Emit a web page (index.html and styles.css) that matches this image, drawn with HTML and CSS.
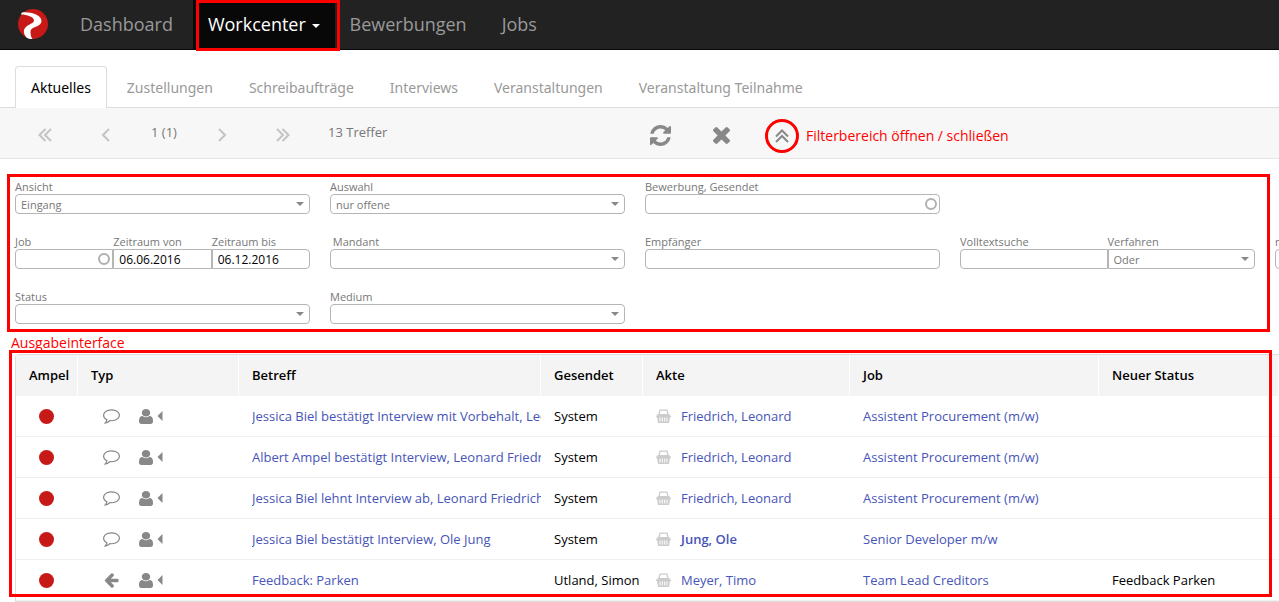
FILE: index.html
```html
<!DOCTYPE html>
<html lang="de">
<head>
	<meta charset="utf-8">
	<title>Workcenter</title>
	<link rel="stylesheet" href="styles.css">
</head>
<body>
	<svg class="sprite" aria-hidden="true">
		<symbol id="i-comment" viewBox="0 256 1792 1536"><path d="M896 384q-204 0-381.5 69.5t-282 187.5-104.5 255q0 112 71.5 213.5t201.5 175.5l87 50-27 96q-24 91-70 172 152-63 275-171l43-38 57 6q69 8 130 8 204 0 381.5-69.5t282-187.5 104.5-255-104.5-255-282-187.5-381.5-69.5zm896 512q0 174-120 321.5t-326 233-450 85.5q-70 0-145-8-198 175-460 242-49 14-114 22h-5q-15 0-27-10.5t-16-27.5v-1q-3-4-.5-12t2-10 4.5-9.5l6-9 7-8.5 8-9q7-8 31-34.5t34.5-38 31-39.5 32.5-51 27-59 26-76q-157-89-247.5-220t-90.5-281q0-174 120-321.5t326-233 450-85.5 450 85.5 326 233 120 321.5z"/></symbol>
		<symbol id="i-user" viewBox="256 128 1280 1536" preserveAspectRatio="none"><path d="M1536 1399q0 109-62.5 187t-150.5 78h-854q-88 0-150.5-78t-62.5-187q0-85 8.5-160.5t31.5-152 58.5-131 94-89 134.5-34.5q131 128 313 128t313-128q76 0 134.5 34.5t94 89 58.5 131 31.5 152 8.5 160.5zm-256-887q0 159-112.5 271.5t-271.5 112.5-271.5-112.5-112.5-271.5 112.5-271.5 271.5-112.5 271.5 112.5 112.5 271.5z"/></symbol>
		<symbol id="i-arrow" viewBox="160 160 1504 1600"><path d="M1664 896v128q0 53-32.5 90.5t-84.5 37.5h-704l293 294q38 36 38 90t-38 90l-75 76q-37 37-90 37-52 0-91-37l-651-652q-37-37-37-90 0-52 37-91l651-650q38-38 91-38 52 0 90 38l75 74q38 38 38 91t-38 91l-293 293h704q52 0 84.5 37.5t32.5 90.5z"/></symbol>
		<symbol id="i-caret" viewBox="0 0 6 10"><path d="M5.500 0v10L.5 5z"/></symbol>
		<symbol id="i-basket" viewBox="0 0 15 14"><path d="M3 5.500L4 1.200h7L12 5.500" fill="none" stroke="currentColor" stroke-width="1.300"/><path d="M1.500 5h12v1.500h1.500v1.500h-1l-1 6H2L1 8H0V6.500h1.500zM3.500 8.500v4h1v-4zm2.300 0v4h1v-4zm2.400 0v4h1v-4zm2.300 0v4h1v-4z" fill-rule="evenodd"/></symbol>
		<symbol id="i-left" viewBox="0 0 14 14"><path d="M11 1L5 7l6 6"/></symbol>
		<symbol id="i-right" viewBox="0 0 14 14"><path d="M3 1l6 6-6 6"/></symbol>
		<symbol id="i-first" viewBox="0 0 14 14"><path d="M7.500 1l-6 6 6 6M13 1L7 7l6 6"/></symbol>
		<symbol id="i-last" viewBox="0 0 14 14"><path d="M1 1l6 6-6 6M6.500 1l6 6-6 6"/></symbol>
		<symbol id="i-up" viewBox="0 0 14 14"><path d="M1 7.500l6-6 6 6M1 13l6-6 6 6"/></symbol>
	</svg>

	<nav class="navbar">
		<a class="brand" href="#" aria-label="Start">
			<svg viewBox="0 0 30 30" width="30" height="30">
				<circle cx="15" cy="15" r="15" fill="#c81919"/>
				<path d="M4 3.500C12 2.500 23.500 6 23.500 12C23.500 18 12.500 17.500 12.500 22.500C12.500 25.500 13 28 14.500 30C12 30 10 29.500 8.500 28.500C6.500 26.500 5.500 23.500 6 21C7.500 15.500 16 15 16 11.500C16 8 9 5.500 2.800 5.500z" fill="#fff"/>
			</svg>
		</a>
		<a class="nav-link" href="#">Dashboard</a>
		<a class="nav-link active" href="#">Workcenter <span class="caret"></span></a>
		<a class="nav-link" href="#">Bewerbungen</a>
		<a class="nav-link" href="#">Jobs</a>
	</nav>

	<div class="tabs">
		<a class="tab active" href="#">Aktuelles</a>
		<a class="tab" href="#">Zustellungen</a>
		<a class="tab" href="#">Schreibaufträge</a>
		<a class="tab" href="#">Interviews</a>
		<a class="tab" href="#">Veranstaltungen</a>
		<a class="tab" href="#">Veranstaltung Teilnahme</a>
	</div>

	<div class="toolbar">
		<div class="pager">
			<button type="button" aria-label="Erste Seite"><svg class="chevron"><use href="#i-first"/></svg></button>
			<button type="button" aria-label="Vorherige Seite"><svg class="chevron"><use href="#i-left"/></svg></button>
			<span class="pages">1 (1)</span>
			<button type="button" aria-label="Nächste Seite"><svg class="chevron"><use href="#i-right"/></svg></button>
			<button type="button" aria-label="Letzte Seite"><svg class="chevron"><use href="#i-last"/></svg></button>
		</div>
		<span class="hits">13 Treffer</span>
		<div class="actions">
			<button type="button" aria-label="Aktualisieren">
				<svg width="21" height="21" viewBox="0 0 1536 1536"><path d="M1511 928q0 5-1 7-64 268-268 434.500t-478 166.500q-146 0-282.500-55t-243.500-157l-129 129q-19 19-45 19t-45-19-19-45v-448q0-26 19-45t45-19h448q26 0 45 19t19 45-19 45l-137 137q71 66 161 102t187 36q134 0 250-65t186-179q11-17 53-117 8-23 30-23h192q13 0 22.500 9.500t9.500 22.500zm25-800v448q0 26-19 45t-45 19h-448q-26 0-45-19t-19-45 19-45l138-138q-148-137-349-137-134 0-250 65t-186 179q-11 17-53 117-8 23-30 23h-199q-13 0-22.500-9.500t-9.500-22.500v-7q65-268 270-434.500t480-166.500q146 0 284 55.500t245 156.500l130-129q19-19 45-19t45 19 19 45z"/></svg>
			</button>
			<button type="button" aria-label="Zurücksetzen">
				<svg width="17" height="17" viewBox="302 366 1188 1188"><path d="M1490 1322q0 40-28 68l-136 136q-28 28-68 28t-68-28l-294-294-294 294q-28 28-68 28t-68-28l-136-136q-28-28-28-68t28-68l294-294-294-294q-28-28-28-68t28-68l136-136q28-28 68-28t68 28l294 294 294-294q28-28 68-28t68 28l136 136q28 28 28 68t-28 68l-294 294 294 294q28 28 28 68z"/></svg>
			</button>
			<button type="button" class="marked" aria-label="Filterbereich öffnen / schließen"><svg class="chevron"><use href="#i-up"/></svg></button>
			<span class="note">Filterbereich öffnen / schließen</span>
		</div>
	</div>

	<form class="filter">
		<div class="filter-row">
			<div class="field select"><label for="ansicht">Ansicht</label><select id="ansicht"><option>Eingang</option></select></div>
			<div class="field select"><label for="auswahl">Auswahl</label><select id="auswahl"><option>nur offene</option></select></div>
			<div class="field lookup"><label for="bewerbung">Bewerbung, Gesendet</label><input id="bewerbung" type="text"></div>
		</div>
		<div class="filter-row">
			<div class="group">
				<div class="field lookup"><label for="job">Job</label><input id="job" type="text"></div>
				<div class="field"><label for="von">Zeitraum von</label><input id="von" type="text" value="06.06.2016"></div>
				<div class="field"><label for="bis">Zeitraum bis</label><input id="bis" type="text" value="06.12.2016"></div>
			</div>
			<div class="field select"><label for="mandant">&nbsp;Mandant</label><select id="mandant"><option></option></select></div>
			<div class="field"><label for="empfaenger">Empfänger</label><input id="empfaenger" type="text"></div>
			<div class="group">
				<div class="field"><label for="volltext">Volltextsuche</label><input id="volltext" type="text"></div>
				<div class="field select"><label for="verfahren">Verfahren</label><select id="verfahren"><option>Oder</option></select></div>
			</div>
			<div class="field"><label for="nur">nur</label><input id="nur" type="text"></div>
		</div>
		<div class="filter-row">
			<div class="field select"><label for="status">Status</label><select id="status"><option></option></select></div>
			<div class="field select"><label for="medium">Medium</label><select id="medium"><option></option></select></div>
		</div>
	</form>

	<p class="note heading">Ausgabeinterface</p>

	<div class="output">
		<table>
			<colgroup><col class="c-ampel"><col class="c-typ"><col class="c-betreff"><col class="c-gesendet"><col class="c-akte"><col class="c-job"><col class="c-status"><col></colgroup>
			<thead>
				<tr><th>Ampel</th><th>Typ</th><th>Betreff</th><th>Gesendet</th><th>Akte</th><th>Job</th><th>Neuer Status</th><th></th></tr>
			</thead>
			<tbody>
				<tr>
					<td><span class="light"></span></td>
					<td><div class="type"><svg class="kind"><use href="#i-comment"/></svg><svg class="user"><use href="#i-user"/></svg><svg class="open"><use href="#i-caret"/></svg></div></td>
					<td><a class="subject" href="#">Jessica Biel bestätigt Interview mit Vorbehalt, Leonard</a></td>
					<td>System</td>
					<td><div class="file"><svg class="basket"><use href="#i-basket"/></svg><a href="#">Friedrich, Leonard</a></div></td>
					<td><a href="#">Assistent Procurement (m/w)</a></td>
					<td></td><td></td>
				</tr>
				<tr>
					<td><span class="light"></span></td>
					<td><div class="type"><svg class="kind"><use href="#i-comment"/></svg><svg class="user"><use href="#i-user"/></svg><svg class="open"><use href="#i-caret"/></svg></div></td>
					<td><a class="subject" href="#">Albert Ampel bestätigt Interview, Leonard Friedrich</a></td>
					<td>System</td>
					<td><div class="file"><svg class="basket"><use href="#i-basket"/></svg><a href="#">Friedrich, Leonard</a></div></td>
					<td><a href="#">Assistent Procurement (m/w)</a></td>
					<td></td><td></td>
				</tr>
				<tr>
					<td><span class="light"></span></td>
					<td><div class="type"><svg class="kind"><use href="#i-comment"/></svg><svg class="user"><use href="#i-user"/></svg><svg class="open"><use href="#i-caret"/></svg></div></td>
					<td><a class="subject" href="#">Jessica Biel lehnt Interview ab, Leonard Friedrich</a></td>
					<td>System</td>
					<td><div class="file"><svg class="basket"><use href="#i-basket"/></svg><a href="#">Friedrich, Leonard</a></div></td>
					<td><a href="#">Assistent Procurement (m/w)</a></td>
					<td></td><td></td>
				</tr>
				<tr>
					<td><span class="light"></span></td>
					<td><div class="type"><svg class="kind"><use href="#i-comment"/></svg><svg class="user"><use href="#i-user"/></svg><svg class="open"><use href="#i-caret"/></svg></div></td>
					<td><a class="subject" href="#">Jessica Biel bestätigt Interview, Ole Jung</a></td>
					<td>System</td>
					<td><div class="file"><svg class="basket"><use href="#i-basket"/></svg><a class="unread" href="#">Jung, Ole</a></div></td>
					<td><a href="#">Senior Developer m/w</a></td>
					<td></td><td></td>
				</tr>
				<tr>
					<td><span class="light"></span></td>
					<td><div class="type"><svg class="kind"><use href="#i-arrow"/></svg><svg class="user"><use href="#i-user"/></svg><svg class="open"><use href="#i-caret"/></svg></div></td>
					<td><a class="subject" href="#">Feedback: Parken</a></td>
					<td>Utland, Simon</td>
					<td><div class="file"><svg class="basket"><use href="#i-basket"/></svg><a href="#">Meyer, Timo</a></div></td>
					<td><a href="#">Team Lead Creditors</a></td>
					<td>Feedback Parken</td><td></td>
				</tr>
			</tbody>
		</table>
	</div>
</body>
</html>
```
FILE: styles.css
```css
* {
	box-sizing: border-box;
}
body {
	margin: 0;
	overflow: hidden;
	background: #fff;
	color: #000;
	font-family: "Open Sans", "Noto Sans", sans-serif;
	font-size: 13px;
}
a {
	color: #4754b8;
	text-decoration: none;
}
button {
	display: flex;
	align-items: center;
	justify-content: center;
	padding: 0;
	border: 0;
	background: none;
	color: #888;
}
svg {
	display: block;
	fill: currentColor;
}
.sprite {
	display: none;
}

/* navigation */
.navbar {
	display: flex;
	height: 50px;
	background: #222;
	border-bottom: 1px solid #080808;
}
.brand {
	width: 65px;
	padding: 9px 0 0 18px;
}
.nav-link {
	padding: 0 20px 0 15px;
	color: #999;
	font-size: 18px;
	line-height: 48px;
}
.nav-link.active {
	position: relative;
	padding-right: 15px;
	background: #080808;
	color: #fff;
}
.nav-link.active::after {
	content: "";
	position: absolute;
	inset: 0 -5px -2px 3px;
	border: 3px solid #f00;
}
.caret {
	display: inline-block;
	margin-left: 1px;
	vertical-align: middle;
	border: 4px solid transparent;
	border-top-color: currentColor;
	border-bottom: 0;
}

/* tabs */
.tabs {
	display: flex;
	gap: 4px;
	padding: 16px 15px 0;
	border-bottom: 1px solid #ddd;
}
.tab {
	height: 41px;
	padding: 0 15px;
	border: 1px solid transparent;
	border-bottom: 0;
	color: #999;
	font-family: "Noto Sans", "Open Sans", sans-serif;
	font-size: 14px;
	line-height: 42px;
}
.tab.active {
	margin-bottom: -1px;
	height: 42px;
	border-color: #ddd;
	border-radius: 4px 4px 0 0;
	background: #fff;
	color: #000;
}

/* toolbar */
.toolbar {
	display: flex;
	height: 51px;
	padding-left: 15px;
	background: #f7f7f7;
	border-bottom: 1px solid #e5e5e5;
	color: #777;
	line-height: 48px;
}
.pager {
	display: flex;
}
.pager button {
	width: 60px;
	padding-top: 4px;
	color: #c4c4c4;
}
.pages {
	width: 58px;
	text-align: center;
}
.chevron {
	width: 14px;
	height: 14px;
	fill: none;
	stroke: currentColor;
	stroke-width: 2;
}
.hits {
	width: 317px;
	padding-left: 15px;
}
.actions {
	display: flex;
	align-items: center;
	padding-top: 5px;
}
.actions button {
	width: 61px;
}
.actions .marked {
	width: 34px;
	height: 34px;
	margin: 0 7px 0 13px;
	border: 3px solid #f00;
	border-radius: 50%;
}
.note {
	color: #f00;
	font-size: 14px;
}

/* filter */
.filter {
	position: relative;
	display: flex;
	flex-direction: column;
	gap: 20px;
	padding: 20px 15px 0;
}
.filter::after {
	content: "";
	position: absolute;
	inset: 15px 9px -8px 7px;
	border: 3px solid #f00;
	pointer-events: none;
}
.filter-row {
	display: grid;
	grid-template-columns: repeat(5, 295px);
	gap: 20px;
}
.group {
	display: flex;
}
.field {
	position: relative;
	flex: 1;
	min-width: 0;
}
.field label {
	display: block;
	height: 15px;
	color: #777;
	font-size: 11px;
	line-height: 16px;
	white-space: nowrap;
}
.field input,
.field select {
	display: block;
	width: 100%;
	height: 20px;
	padding: 0 5px;
	border: 1px solid #b5b5b5;
	border-radius: 4px;
	background: #fff;
	color: #000;
	font-family: inherit;
	font-size: 12px;
	appearance: none;
}
.field select {
	color: #777;
	font-size: 11px;
}
.group .field:not(:first-child) > :last-child {
	border-top-left-radius: 0;
	border-bottom-left-radius: 0;
}
.group .field:not(:last-child) > :last-child {
	border-top-right-radius: 0;
	border-bottom-right-radius: 0;
}
.select::after {
	content: "";
	position: absolute;
	right: 6px;
	bottom: 8px;
	border: 4px solid transparent;
	border-top-color: #888;
	border-bottom: 0;
	pointer-events: none;
}
.lookup::after {
	content: "";
	position: absolute;
	right: 3px;
	bottom: 4px;
	width: 8px;
	height: 8px;
	border: 2px solid #b0b0b0;
	border-radius: 50%;
}

/* result table */
.heading {
	margin: 9px 0 0 11px;
	line-height: 20px;
}
.output {
	position: relative;
	margin: 1px 0 0 15px;
	border: 1px solid #ddd;
	border-right: 0;
	border-radius: 4px 0 0 0;
}
.output::after {
	content: "";
	position: absolute;
	inset: -5px 7px 4px -7px;
	border: 3px solid #f00;
	pointer-events: none;
}
table {
	width: 100%;
	table-layout: fixed;
	border-collapse: separate;
	border-spacing: 0;
}
.c-ampel { width: 62px; }
.c-typ { width: 161px; }
.c-betreff { width: 302px; }
.c-gesendet { width: 102px; }
.c-akte { width: 207px; }
.c-job { width: 249px; }
.c-status { width: 170px; }
th,
td {
	height: 41px;
	padding: 0 0 0 13px;
	overflow: hidden;
	text-align: left;
	white-space: nowrap;
	border-bottom: 1px solid #f0f0f0;
}
th {
	padding-bottom: 2px;
	background: #f4f4f4;
	border-right: 1px solid #fff;
	border-bottom: 0;
	font-weight: 600;
}
.light {
	display: block;
	width: 15px;
	height: 15px;
	margin-left: 10px;
	border-radius: 50%;
	background: #c81919;
}
.type {
	display: flex;
	align-items: center;
	padding-left: 12px;
	color: #888;
}
.kind {
	width: 17px;
	height: 15px;
	margin-right: 19px;
}
.user {
	width: 14px;
	height: 15px;
	margin-right: 4px;
}
.open {
	width: 6px;
	height: 10px;
}
.subject {
	display: block;
	overflow: hidden;
}
.file {
	display: flex;
	align-items: center;
}
.basket {
	width: 15px;
	height: 14px;
	margin-right: 10px;
	color: #ccc;
}
.unread {
	font-weight: 600;
}
```
